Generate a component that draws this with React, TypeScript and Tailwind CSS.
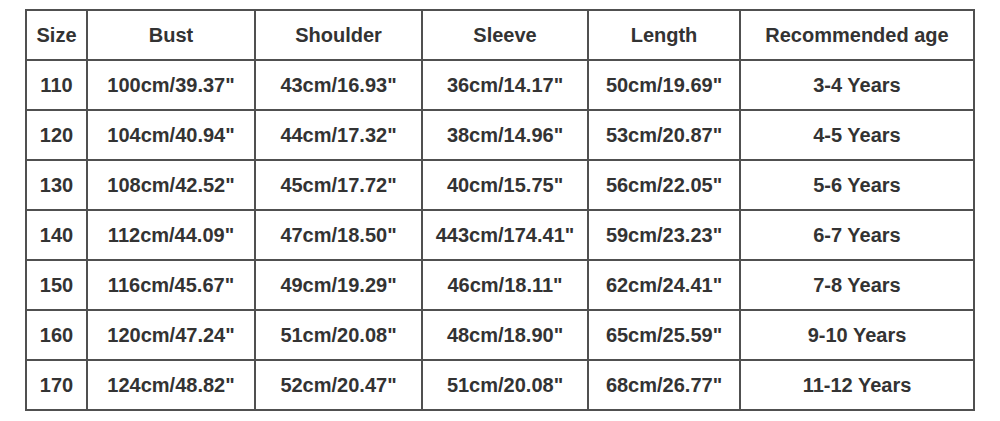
const headers = ["Size", "Bust", "Shoulder", "Sleeve", "Length", "Recommended age"];

const rows = [
  ["110", "100cm/39.37\"", "43cm/16.93\"", "36cm/14.17\"", "50cm/19.69\"", "3-4 Years"],
  ["120", "104cm/40.94\"", "44cm/17.32\"", "38cm/14.96\"", "53cm/20.87\"", "4-5 Years"],
  ["130", "108cm/42.52\"", "45cm/17.72\"", "40cm/15.75\"", "56cm/22.05\"", "5-6 Years"],
  ["140", "112cm/44.09\"", "47cm/18.50\"", "443cm/174.41\"", "59cm/23.23\"", "6-7 Years"],
  ["150", "116cm/45.67\"", "49cm/19.29\"", "46cm/18.11\"", "62cm/24.41\"", "7-8 Years"],
  ["160", "120cm/47.24\"", "51cm/20.08\"", "48cm/18.90\"", "65cm/25.59\"", "9-10 Years"],
  ["170", "124cm/48.82\"", "52cm/20.47\"", "51cm/20.08\"", "68cm/26.77\"", "11-12 Years"],
];

const Cell = ({ children }: { children: React.ReactNode }) => (
  <div className="h-[50px] flex items-center justify-center border-r-2 border-b-2 border-[#505050]">
    {children}
  </div>
);

export default function App() {
  return (
    <div className="w-[1000px] h-[421px] bg-white pt-[9px] pl-[25px] font-['Liberation_Sans',Arial,sans-serif] font-bold text-[20px] text-[#333]">
      <div className="w-[950px] grid grid-cols-[61px_168px_167px_166px_152px_234px] border-t-2 border-l-2 border-[#505050]">
        {headers.map((h) => (
          <Cell key={h}>{h}</Cell>
        ))}
        {rows.map((r) =>
          r.map((c, i) => <Cell key={r[0] + i}>{c}</Cell>)
        )}
      </div>
    </div>
  );
}
